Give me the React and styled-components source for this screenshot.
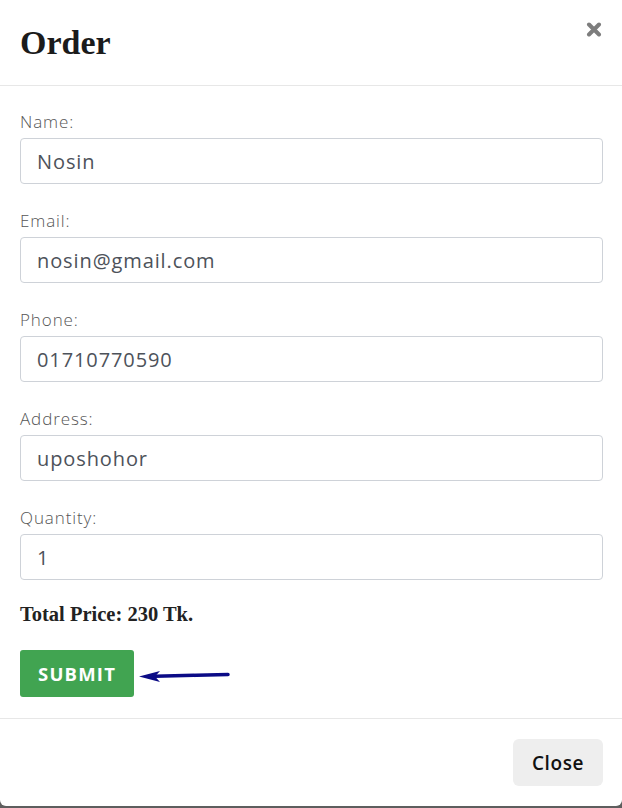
import React from 'react';
import styled, { createGlobalStyle } from 'styled-components';

const GlobalStyle = createGlobalStyle`
  body {
    margin: 0;
    background-color: #5e5e5e;
    font-family: 'Open Sans', 'Noto Sans', sans-serif;
  }
`;

const Modal = styled.div`
  width: 622px;
  background-color: #ffffff;
  border-radius: 0 0 6px 6px;
`;

const Header = styled.div`
  height: 85px;
  padding: 0 20px;
  display: flex;
  justify-content: space-between;
  align-items: center;
  border-bottom: 1px solid #e7e7e7;
`;

const Title = styled.h2`
  margin: 0;
  font-family: 'Liberation Serif', serif;
  font-size: 34px;
  font-weight: 700;
  color: #1b1b1b;
`;

const CloseIcon = styled.button`
  align-self: flex-start;
  margin-top: 22px;
  padding: 0;
  border: none;
  background: none;
  display: flex;
`;

const Body = styled.form`
  padding: 24px 19px 21px 20px;
`;

const Field = styled.div`
  display: flex;
  flex-direction: column;
  margin-bottom: 25px;
`;

const Label = styled.label`
  font-size: 17px;
  font-weight: 300;
  line-height: 24px;
  letter-spacing: 0.9px;
  color: #555555;
  margin-bottom: 4px;
`;

const Input = styled.input`
  box-sizing: border-box;
  height: 46px;
  padding: 0 16px;
  border: 1px solid #ced2d8;
  border-radius: 4px;
  font-family: 'Open Sans', sans-serif;
  font-size: 20px;
  letter-spacing: 0.9px;
  color: #4d525a;
  outline: none;
`;

const Total = styled.p`
  margin: -3px 0 24px;
  font-family: 'Liberation Serif', serif;
  font-size: 20.5px;
  font-weight: 700;
  line-height: 24px;
  color: #222222;
`;

const SubmitRow = styled.div`
  display: flex;
  align-items: center;
  gap: 5px;
`;

const SubmitBtn = styled.button`
  height: 47px;
  padding: 0 18px;
  border: none;
  border-radius: 3px;
  background-color: #41a451;
  color: #ffffff;
  font-family: 'Open Sans', sans-serif;
  font-size: 18.5px;
  font-weight: 700;
  letter-spacing: 1.2px;
`;

const Footer = styled.div`
  display: flex;
  justify-content: flex-end;
  padding: 20px 19px 20px 20px;
  border-top: 1px solid #e7e7e7;
`;

const CloseBtn = styled.button`
  width: 90px;
  height: 47px;
  border: none;
  border-radius: 6px;
  background-color: #eeeeee;
  color: #111111;
  font-family: 'Open Sans', sans-serif;
  font-size: 19px;
  font-weight: 600;
  letter-spacing: 0.6px;
`;

const fields = [
  { label: 'Name:', value: 'Nosin' },
  { label: 'Email:', value: 'nosin@gmail.com' },
  { label: 'Phone:', value: '01710770590' },
  { label: 'Address:', value: 'uposhohor' },
  { label: 'Quantity:', value: '1' },
];

const App = () => (
  <>
    <GlobalStyle />
    <Modal>
      <Header>
        <Title>Order</Title>
        <CloseIcon aria-label='close'>
          <svg width='16' height='15' viewBox='0 0 16 15'>
            <path d='M3 2.5 L13 12.5 M13 2.5 L3 12.5' stroke='#7d7d7d' strokeWidth='4' strokeLinecap='round' />
          </svg>
        </CloseIcon>
      </Header>
      <Body>
        {fields.map((f) => (
          <Field key={f.label}>
            <Label>{f.label}</Label>
            <Input defaultValue={f.value} />
          </Field>
        ))}
        <Total>Total Price: 230 Tk.</Total>
        <SubmitRow>
          <SubmitBtn type='button'>SUBMIT</SubmitBtn>
          <svg width='92' height='20' viewBox='0 0 92 20'>
            <path d='M16 12.3 L89 10.5' stroke='#0b0b86' strokeWidth='3.5' strokeLinecap='round' />
            <path d='M0 12.5 L21 7 L16 12.4 L21 18 Z' fill='#0b0b86' />
          </svg>
        </SubmitRow>
      </Body>
      <Footer>
        <CloseBtn type='button'>Close</CloseBtn>
      </Footer>
    </Modal>
  </>
);

export default App;
